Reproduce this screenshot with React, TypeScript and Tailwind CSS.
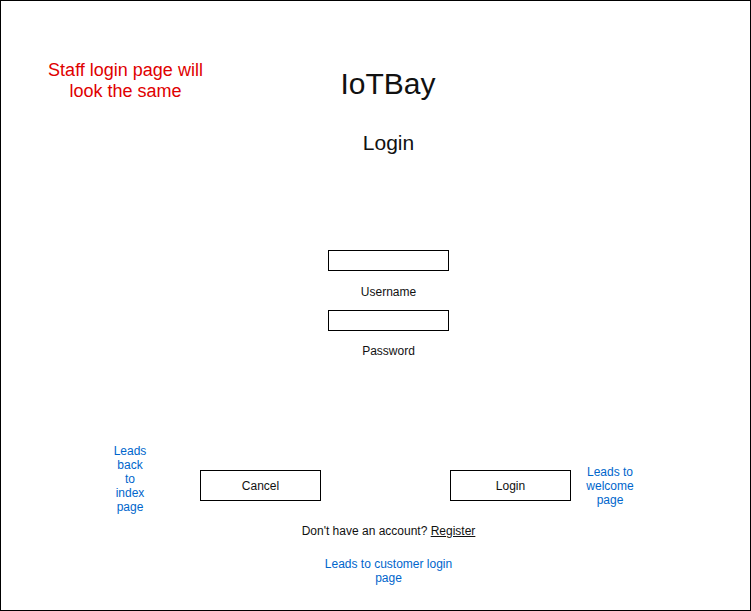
const Note = ({ lines, className = "" }: { lines: string[]; className?: string }) => (
  <p className={`text-center text-[12px] leading-[14px] text-[#0066cc] ${className}`}>
    {lines.map((l, i) => (
      <span key={i} className="block">
        {l}
      </span>
    ))}
  </p>
);

const Field = () => <div className="w-[121px] h-[21px] border border-black bg-white" />;

const BoxButton = ({ label, className = "" }: { label: string; className?: string }) => (
  <button
    type="button"
    className={`w-[121px] h-[31px] border border-black bg-white text-[12px] leading-[14px] text-[#111] ${className}`}
  >
    {label}
  </button>
);

export default function App() {
  return (
    <div className="w-[751px] h-[611px] border border-black bg-white text-[#111] font-['Liberation_Sans',Arial,sans-serif]">
      {/* header: note + title */}
      <div className="grid grid-cols-[249px_276px_1fr] pt-[59px]">
        <p className="text-center text-[18px] leading-[21px] text-[#e00000]">
          Staff login page will
          <br />
          look the same
        </p>
        <h1 className="mt-[9px] text-center text-[30px] leading-[30px]">IoTBay</h1>
      </div>

      {/* form */}
      <div className="flex flex-col items-center pl-[26px]">
        <h2 className="mt-[30px] text-[21px] leading-[21px]">Login</h2>
        <div className="mt-[97px]">
          <Field />
        </div>
        <label className="mt-[14px] text-[12px] leading-[14px]">Username</label>
        <div className="mt-[11px]">
          <Field />
        </div>
        <label className="mt-[13px] text-[12px] leading-[14px]">Password</label>
      </div>

      {/* buttons with notes */}
      <div className="flex items-start mt-[86px]">
        <Note className="ml-[99px] w-[60px]" lines={["Leads", "back", "to", "index", "page"]} />
        <BoxButton label="Cancel" className="ml-[40px] mt-[26px]" />
        <BoxButton label="Login" className="ml-[129px] mt-[26px]" />
        <Note className="ml-[9px] mt-[21px] w-[60px]" lines={["Leads to", "welcome", "page"]} />
      </div>

      {/* footer */}
      <div className="flex flex-col items-center pl-[26px]">
        <p className="mt-[10px] text-[12px] leading-[14px]">
          Don't have an account? <span className="underline">Register</span>
        </p>
        <Note className="mt-[19px]" lines={["Leads to customer login", "page"]} />
      </div>
    </div>
  );
}
